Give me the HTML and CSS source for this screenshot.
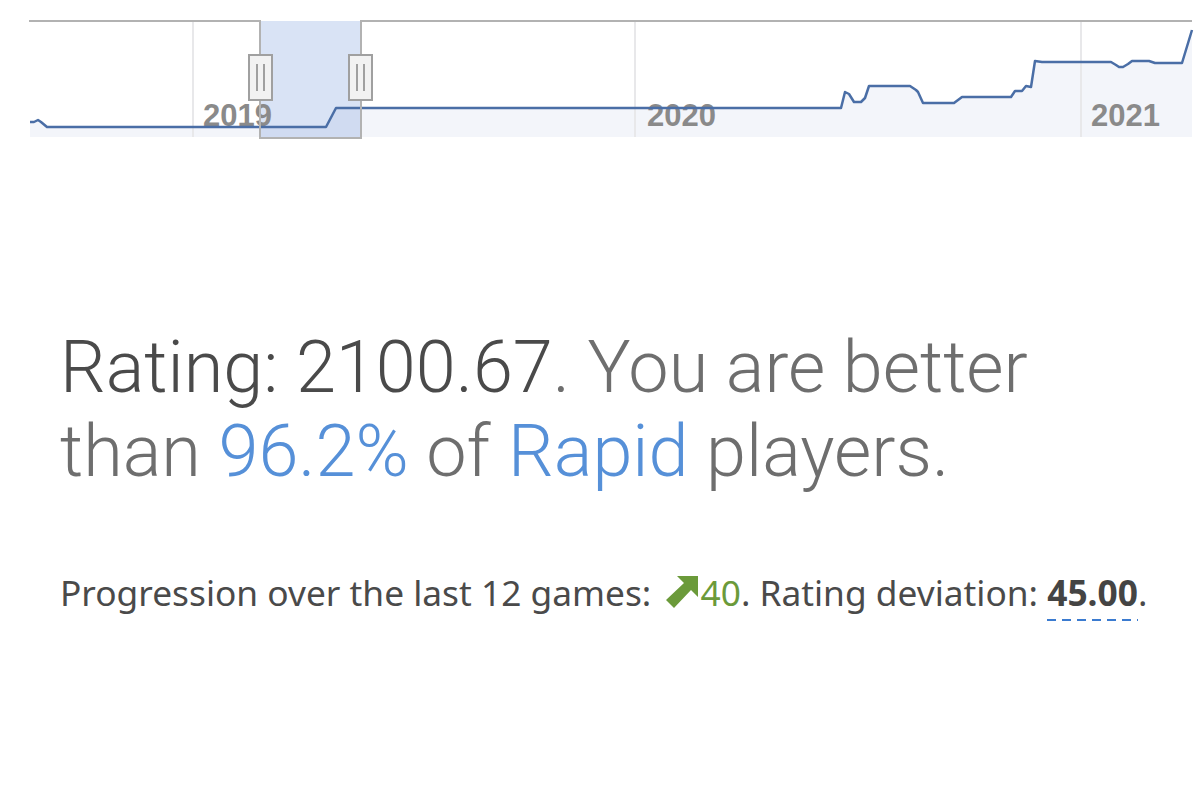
FILE: index.html
```html
<!DOCTYPE html>
<html lang="en">
<head>
<meta charset="utf-8">
<title>Rapid rating</title>
<link rel="stylesheet" href="styles.css">
</head>
<body>
<div class="navigator">
  <svg class="nav-svg" width="1200" height="145" viewBox="0 0 1200 145">
    <!-- plot area under the series -->
    <path class="nav-area" d="M30 122 L34 122 L38 120 L41 122 L47 127 L326 127 L336 108 L841 108 L845 92 L849 94 L854 102 L861 102 L865 98 L869 86 L910 86 L916 90 L918 92 L923 103 L954 103 L958 100 L962 97 L1011 97 L1015 91 L1022 91 L1026 86 L1031 87 L1035 61 L1042 62 L1111 62 L1116 65 L1119 67 L1123 67 L1128 64 L1132 61 L1149 61 L1155 63 L1182 63 L1192 30 L1192 137 L30 137 Z"/>
    <!-- year grid lines -->
    <line class="grid" x1="193" y1="22" x2="193" y2="137"/>
    <line class="grid" x1="635" y1="22" x2="635" y2="137"/>
    <line class="grid" x1="1081" y1="22" x2="1081" y2="137"/>
    <!-- selected range -->
    <rect class="mask" x="260" y="21" width="101" height="117"/>
    <!-- year labels -->
    <text class="year" x="203" y="126">2019</text>
    <text class="year" x="647" y="126">2020</text>
    <text class="year" x="1091" y="126">2021</text>
    <!-- rating series -->
    <path class="series" d="M30 122 L34 122 L38 120 L41 122 L47 127 L326 127 L336 108 L841 108 L845 92 L849 94 L854 102 L861 102 L865 98 L869 86 L910 86 L916 90 L918 92 L923 103 L954 103 L958 100 L962 97 L1011 97 L1015 91 L1022 91 L1026 86 L1031 87 L1035 61 L1042 62 L1111 62 L1116 65 L1119 67 L1123 67 L1128 64 L1132 61 L1149 61 L1155 63 L1182 63 L1192 30"/>
    <!-- outline: top edge and frame round the selection -->
    <path class="outline" d="M29 21 L260 21 L260 138 L361 138 L361 21 L1192 21"/>
    <!-- range handles -->
    <g class="handle">
      <rect x="249" y="55" width="23" height="45"/>
      <line x1="257" y1="64" x2="257" y2="91"/>
      <line x1="264" y1="64" x2="264" y2="91"/>
    </g>
    <g class="handle">
      <rect x="349" y="55" width="23" height="45"/>
      <line x1="357" y1="64" x2="357" y2="91"/>
      <line x1="364" y1="64" x2="364" y2="91"/>
    </g>
  </svg>
</div>

<section class="perf">
  <h2 class="perf-rating">
    <span class="rating">Rating: 2100.67</span>. You are better than <a class="link">96.2%</a> of <a class="link">Rapid</a> players.
  </h2>
  <p class="perf-progress">
    Progression over the last 12 games:
    <span class="up"><svg class="up-icon" width="34" height="33" viewBox="0 0 34 33"><path d="M13 0 H34 V21 L27 14 L10 32 L2 24 L20 7 Z"/></svg>40</span>. Rating deviation: <strong class="deviation">45.00</strong>.
  </p>
</section>
</body>
</html>
```

FILE: styles.css
```css
html, body {
  margin: 0;
  padding: 0;
  background: #ffffff;
}

.navigator {
  height: 145px;
}

.nav-svg {
  display: block;
}

.nav-area {
  fill: #f3f5fa;
}

.grid {
  stroke: #e8e8ea;
  stroke-width: 2;
}

.mask {
  fill: rgba(102, 145, 215, 0.25);
}

.year {
  font-family: "Liberation Sans", Arial, sans-serif;
  font-weight: bold;
  font-size: 31px;
  fill: #8a8a8a;
}

.series {
  fill: none;
  stroke: #4a6ea6;
  stroke-width: 2.5;
  stroke-linejoin: round;
}

.outline {
  fill: none;
  stroke: #b2b2b2;
  stroke-width: 2;
}

.handle rect {
  fill: #f2f2f2;
  stroke: #a0a0a0;
  stroke-width: 2;
}

.handle line {
  stroke: #a0a0a0;
  stroke-width: 2;
}

.perf {
  padding: 0 40px 0 60px;
}

.perf-rating {
  max-width: 1010px;
  margin: 181px 0 0;
  font-family: Roboto, "Liberation Sans", sans-serif;
  font-weight: 300;
  font-size: 72px;
  line-height: 84px;
  color: #6e6e6e;
}

.rating {
  color: #4a4a4a;
}

.link {
  color: #5690d8;
  text-decoration: none;
}

.perf-progress {
  margin: 72px 0 0;
  font-family: "Noto Sans", "Open Sans", sans-serif;
  font-size: 35.3px;
  line-height: 1.5;
  color: #4a4a4a;
}

.up {
  color: #6b9a3a;
  margin-left: 4px;
}

.up-icon {
  fill: #6b9a3a;
  vertical-align: -3px;
  margin-right: 2px;
}

/* dashed hint underline under the deviation value */
.deviation {
  display: inline-block;
  line-height: 1.1;
  padding-bottom: 9px;
  font-weight: bold;
  color: #444444;
  background-image: linear-gradient(to right, #3b7bd0 60%, transparent 60%);
  background-position: left bottom;
  background-size: 15px 2px;
  background-repeat: repeat-x;
}
```
